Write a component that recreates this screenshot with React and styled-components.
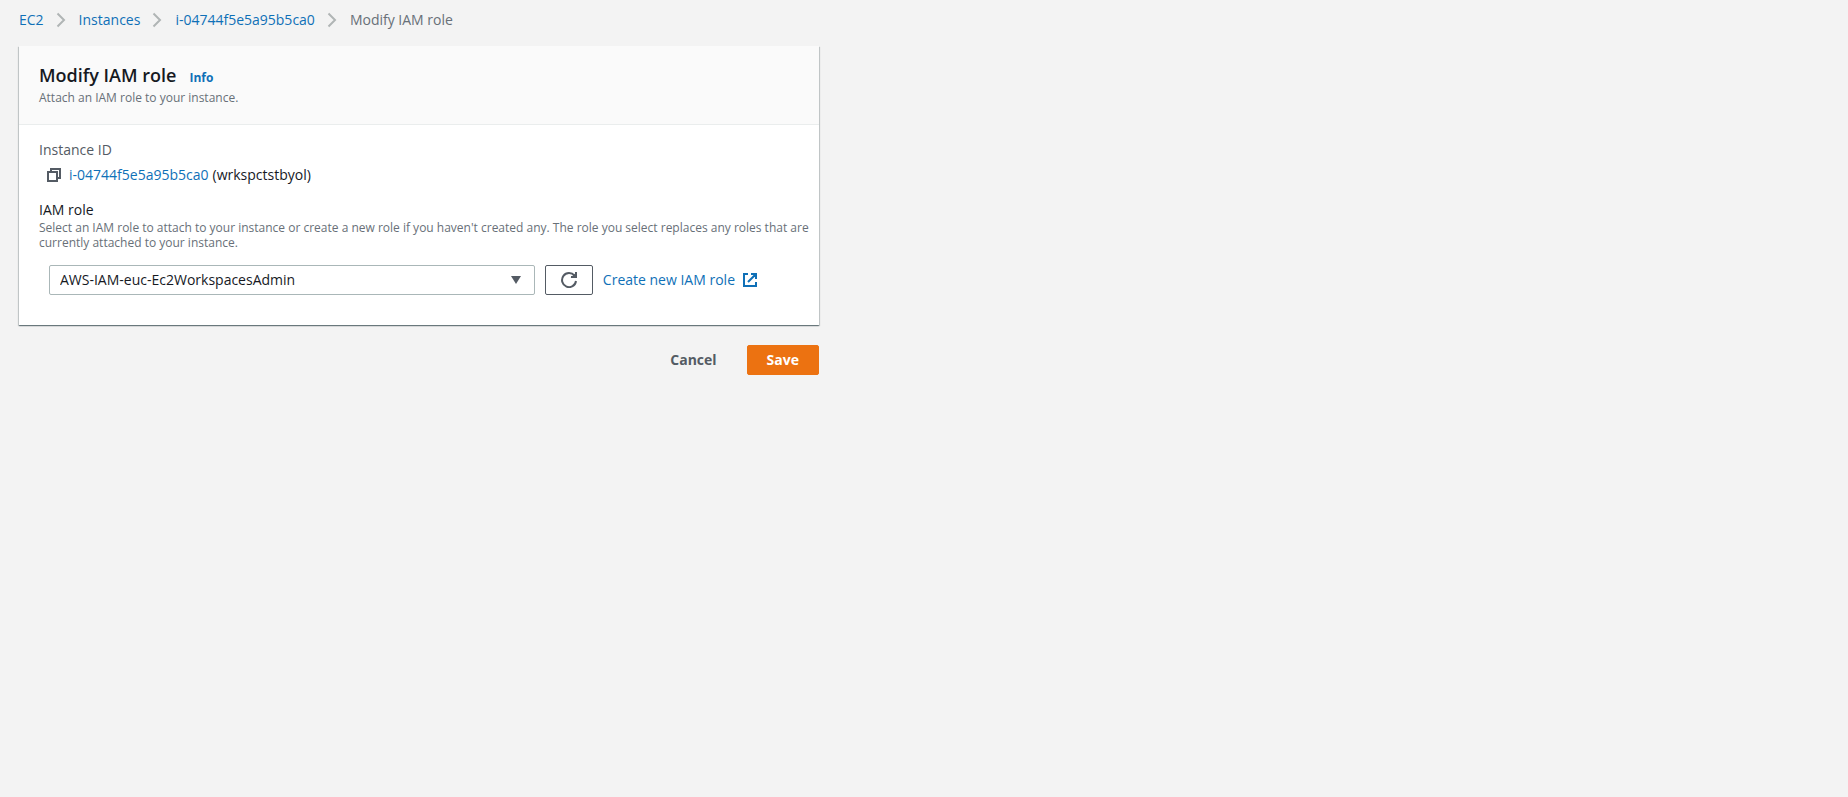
import React from "react";
import styled, { createGlobalStyle } from "styled-components";

const GlobalStyle = createGlobalStyle`
  *, *::before, *::after { box-sizing: border-box; }
  body {
    margin: 0;
    background: #f3f3f3;
    color: #16191f;
    font: 14px/22px "Open Sans", "Noto Sans", sans-serif;
  }
  h1, p, ol, dl, dd { margin: 0; padding: 0; }
`;

const Page = styled.div`
  padding: 8px 19px;
`;

const Link = styled.a`
  color: #0f70b7;
  text-decoration: none;
  &:hover { text-decoration: underline; }
`;

const Trail = styled.ol`
  display: flex;
  flex-wrap: wrap;
  list-style: none;
  margin-bottom: 14px;
`;

const Crumb = styled.li`
  display: flex;
  align-items: center;
  color: #687078;
  line-height: 24px;
`;

const Chevron = styled.svg`
  width: 10px;
  height: 16px;
  margin: 0 13px 0 12px;
  fill: none;
  stroke: #b0b5b5;
  stroke-width: 2;
`;

const Form = styled.form`
  max-width: 800px;
`;

const Card = styled.section`
  background: #fff;
  box-shadow: 0 1px 1px 0 rgba(0, 28, 36, 0.4), 1px 1px 1px 0 rgba(0, 28, 36, 0.15),
    -1px 1px 1px 0 rgba(0, 28, 36, 0.15);
`;

const CardHeader = styled.header`
  padding: 15px 20px 19px;
  background: #fafafa;
  border-bottom: 1px solid #eaeded;
`;

const TitleRow = styled.div`
  display: flex;
  align-items: baseline;
  gap: 13px;
  padding-bottom: 1px;
`;

const Title = styled.h1`
  font-size: 18px;
  line-height: 28px;
  font-weight: 600;
`;

const InfoLink = styled(Link)`
  font-size: 12px;
  font-weight: 700;
`;

const Hint = styled.p`
  font-size: 12px;
  line-height: 15px;
  color: #687078;
`;

const WideHint = styled(Hint)`
  margin-right: -18px;
`;

const CardBody = styled.div`
  display: grid;
  gap: 13px;
  padding: 14px 20px 30px;
`;

const TermLabel = styled.dt`
  color: #545b64;
`;

const TermValue = styled.dd`
  display: flex;
  align-items: center;
  gap: 4px;
  padding: 3px 0 0 8px;
`;

const IconButton = styled.button`
  display: flex;
  padding: 0;
  margin-right: 4px;
  border: 0;
  background: none;
  color: #545b64;
  cursor: pointer;
`;

const Icon = styled.svg`
  display: block;
  width: ${(p) => p.$size || 14}px;
  height: ${(p) => p.$size || 14}px;
  fill: none;
  stroke: currentColor;
  stroke-width: 2;
`;

const FieldLabel = styled.label`
  display: block;
  line-height: 21px;
`;

const ControlRow = styled.div`
  display: flex;
  align-items: center;
  gap: 10px;
  padding: 15px 42px 0 10px;
`;

const SelectBox = styled.div`
  display: grid;
  flex: 1;
  align-items: center;
  & > * { grid-area: 1 / 1; }
`;

const Select = styled.select`
  appearance: none;
  width: 100%;
  height: 30px;
  padding: 0 40px 0 10px;
  border: 1px solid #aab7b8;
  border-radius: 2px;
  background: #fff;
  color: inherit;
  font: inherit;
`;

const Caret = styled.svg`
  width: 10px;
  height: 8px;
  margin-right: 14px;
  justify-self: end;
  fill: #545b64;
  pointer-events: none;
`;

const RefreshButton = styled.button`
  display: grid;
  place-items: center;
  width: 48px;
  height: 30px;
  padding: 0;
  border: 1px solid #545b64;
  border-radius: 2px;
  background: #fff;
  color: #545b64;
  cursor: pointer;
`;

const ExternalLink = styled(Link)`
  display: flex;
  align-items: center;
  gap: 8px;
  white-space: nowrap;
`;

const Actions = styled.div`
  display: flex;
  justify-content: flex-end;
  gap: 10px;
  margin-top: 20px;
`;

const Button = styled.button`
  height: 30px;
  padding: 0 19px;
  border: 1px solid ${(p) => (p.$primary ? "#ec7211" : "transparent")};
  border-radius: 2px;
  background: ${(p) => (p.$primary ? "#ec7211" : "transparent")};
  color: ${(p) => (p.$primary ? "#fff" : "#545b64")};
  font: inherit;
  font-weight: 700;
  cursor: pointer;
`;

const INSTANCE = "i-04744f5e5a95b5ca0";
const CRUMBS = ["EC2", "Instances", INSTANCE];

export default function App() {
  return (
    <>
      <GlobalStyle />
      <Page>
        <nav aria-label="Breadcrumbs">
          <Trail>
            {CRUMBS.map((name) => (
              <Crumb key={name}>
                <Link href="#">{name}</Link>
                <Chevron viewBox="0 0 10 16" aria-hidden="true">
                  <path d="M1.5 1.5 8 8l-6.500 6.500" />
                </Chevron>
              </Crumb>
            ))}
            <Crumb aria-current="page">Modify IAM role</Crumb>
          </Trail>
        </nav>
        <Form onSubmit={(e) => e.preventDefault()}>
          <Card>
            <CardHeader>
              <TitleRow>
                <Title>Modify IAM role</Title>
                <InfoLink href="#">Info</InfoLink>
              </TitleRow>
              <Hint>Attach an IAM role to your instance.</Hint>
            </CardHeader>
            <CardBody>
              <dl>
                <TermLabel>Instance ID</TermLabel>
                <TermValue>
                  <IconButton type="button" aria-label="Copy instance ID">
                    <Icon viewBox="0 0 14 14" aria-hidden="true">
                      <path d="M1 4h9v9H1zM4 4V1h9v9h-3" />
                    </Icon>
                  </IconButton>
                  <Link href="#">{INSTANCE}</Link>
                  <span>(wrkspctstbyol)</span>
                </TermValue>
              </dl>
              <div>
                <FieldLabel htmlFor="iam-role">IAM role</FieldLabel>
                <WideHint id="iam-role-hint">
                  Select an IAM role to attach to your instance or create a new role if you haven't
                  created any. The role you select replaces any roles that are currently attached to
                  your instance.
                </WideHint>
                <ControlRow>
                  <SelectBox>
                    <Select id="iam-role" aria-describedby="iam-role-hint">
                      <option>AWS-IAM-euc-Ec2WorkspacesAdmin</option>
                    </Select>
                    <Caret viewBox="0 0 10 8" aria-hidden="true">
                      <path d="M0 0h10L5 8z" />
                    </Caret>
                  </SelectBox>
                  <RefreshButton type="button" aria-label="Refresh roles">
                    <Icon $size={16} viewBox="0 0 16 16" aria-hidden="true">
                      <path d="M15 9a7 7 0 1 1-1.500-5.300M15 0v5h-5" />
                      <path d="M15 2v3h-3z" />
                    </Icon>
                  </RefreshButton>
                  <ExternalLink href="#">
                    Create new IAM role
                    <Icon viewBox="0 0 14 14" aria-hidden="true">
                      <path d="M5 1H1v12h12V9M8 1h5v5M13 1 5 9" />
                    </Icon>
                  </ExternalLink>
                </ControlRow>
              </div>
            </CardBody>
          </Card>
          <Actions>
            <Button type="button">Cancel</Button>
            <Button type="submit" $primary>
              Save
            </Button>
          </Actions>
        </Form>
      </Page>
    </>
  );
}
